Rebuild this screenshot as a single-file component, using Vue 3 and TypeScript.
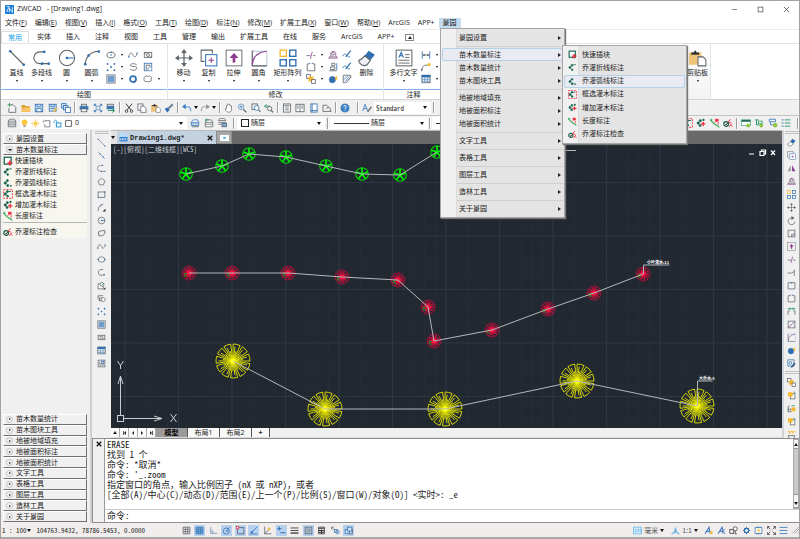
<script setup lang="ts">
import { ref } from 'vue'

const G = '#5d6267'
const B = '#2f6fb0'
const V = '#8d3b8f'
const Y = '#f6b92f'
const T = '#12604c'
const R = '#ee2b3a'

const p = (d: string, c = G, w = 1.3, f = 'none') =>
  `<path d="${d}" stroke="${c}" stroke-width="${w}" fill="${f}"/>`
const fl = (d: string, c = G) => `<path d="${d}" fill="${c}"/>`
const c = (x: number, y: number, r: number, s = G, w = 1.3, f = 'none') =>
  `<circle cx="${x}" cy="${y}" r="${r}" stroke="${s}" stroke-width="${w}" fill="${f}"/>`
const dot = (x: number, y: number, s = B, r = 1.2) => `<circle cx="${x}" cy="${y}" r="${r}" fill="${s}"/>`
const r = (x: number, y: number, w: number, h: number, s = G, f = 'none', sw = 1.3) =>
  `<rect x="${x}" y="${y}" width="${w}" height="${h}" stroke="${s}" stroke-width="${sw}" fill="${f}"/>`

const branch = c(3.6, 8, 1.9, T, 1, T) + c(7, 4.2, 1.7, T, 1, T)
const gear = c(8, 8, 3.8, B, 2) + p('M8 1.5v3M8 11.5v3M1.5 8h3M11.5 8h3M3.5 3.5l2 2M10.5 10.5l2 2M12.5 3.5l-2 2M5.5 10.5l-2 2', B, 1.6)
const scaleMark = p('M2 13.5L9 2l2 11.5M4.5 9.5h6', '#4b7fc0', 2)

const icons: Record<string, string> = {
  logo: '<rect width="16" height="16" rx="1" fill="#1b7fd8"/>' + p('M3 3h5L3 11h3M8 12V6l5 7V4', '#fff', 1.4),
  line: p('M2 2l12 12', G, 1) + dot(2, 2) + dot(14, 14),
  ray: p('M2 2l12 12', B, 1) + dot(5, 5, G) + dot(11, 11, B),
  pline: p('M10 2.5H6a5 5 0 0 0 0 10.500h8', G, 1) + dot(10, 2.5) + dot(8, 13) + dot(14, 13),
  circle: c(8, 8, 6.8, G, 0.9) + p('M8 8h6', B, 0.9) + dot(8, 8),
  arc: p('M2 14C2 7 7 2 14 2', G, 1) + dot(2, 13.5) + dot(5, 5.8) + dot(14, 2.3),
  ellipse: '<ellipse cx="8" cy="8" rx="6.5" ry="4.5" fill="none" stroke="#5d6267" stroke-width="1.3"/>' + dot(8, 8) + dot(8, 3.5),
  spline: p('M1 11C4 1 7 5 8 8s4 6 7-3', G, 1.2) + dot(1.5, 11) + dot(14.5, 5),
  region: r(2, 4, 12, 8) + c(8, 8, 2.4) + dot(4, 6, G, 0.8) + dot(12, 10, G, 0.8),
  points: dot(2.5, 3, B, 1.5) + dot(13.5, 3, B, 1.5) + dot(8, 8, B, 1.5) + dot(2.5, 13, B, 1.5) + dot(13.5, 13, B, 1.5),
  loop: p('M14 5C9 0 2 4 4 6s10 0 10 4-8 4-11 1', G, 1.3),
  block: r(2, 2, 12, 12, B) + r(5, 5, 6, 6, G) + c(11, 11, 3, '#7ea8d2', 1.2, '#fff'),
  hatch: r(1.5, 1.5, 13, 13) + '<rect x="3" y="3" width="10" height="10" fill="#6c9dcd"/>',
  donut: c(8, 8, 4.8, B, 2.8),
  cloud: p('M3 4q2-2 4 0q3-2 5 0q3 1 1 4q1 4-2 4q-2 1-4 0q-3 1-5-1q-1-2 0-4q-1-2 1-3z'),
  move: p('M8 2v12M2 8h12', G, 1.1) + fl('M8 0l2.500 3.500h-5zM8 16l2.500-3.500h-5zM0 8l3.500-2.500v5zM16 8l-3.500-2.500v5z'),
  copy: p('M4 11H1V1h10v3', G, 0.9) + r(5, 5, 10, 10, B, '#fff', 0.9) + p('M10 7.5v5M7.5 10h5', V, 0.9),
  stretch: r(1, 1, 14, 14, G, 'none', 0.8) + fl('M8 3.5L12 8H9.2v4H6.8V8H4z', V),
  fillet: p('M2 2h13v13H2z', '#9eb4d0', 0.7) + p('M2 1v14h13', G, 0.9) + p('M2 14Q3 3 15 2', V, 1),
  array: r(1, 1, 5.5, 5.5, Y, 'none', 1.2) + r(9.5, 1, 5.5, 5.5, B, 'none', 1.2) + r(1, 9.5, 5.5, 5.5, B, 'none', 1.2) + r(9.5, 9.5, 5.5, 5.5, B, 'none', 1.2),
  trim: p('M1 9h6M11 9h4', G) + p('M10 3L7 14', V),
  extend: p('M1 9h7M13 3v11', G) + p('M8 9l5-3', V),
  breakTwo: p('M5 3H2v11h12V3h-3') + dot(6, 2, B, 1) + dot(10, 2, B, 1),
  breakOne: p('M2 3h12v11H2z') + dot(8, 3, B, 1.4),
  join: p('M2 14V7h3M14 14V7h-3', G) + p('M1 3h14M5 1v4M11 1v4', '#31976d', 1.5),
  front: r(1, 1, 6, 6, G, '#fff') + '<rect x="4" y="4" width="8" height="8" fill="#f6b92f"/>' + r(9, 9, 6, 6, G, '#fff'),
  back: r(6, 5, 8, 9, G, '#fff') + '<rect x="2" y="2" width="8" height="8" fill="#f6b92f"/>' + p('M12 1l2 2-2 2', T, 1.2),
  above: p('M5 4H2v8', G) + r(2, 9, 5, 5) + '<rect x="8" y="6" width="7" height="7" fill="#f6b92f"/>' + p('M8 3h6', '#31976d', 1.5),
  offset: p('M1 13h14L12 8a4 4 0 1 0-7 0z', V, 1.2) + p('M3 11h10', G, 1.2) + c(8, 6, 2.2),
  align: p('M2 14h12M4 12V8h7v4zM6 6V2h5v4z') + p('M14 2v11', B),
  edit: p('M1 10q3-6 6-2t6 3', B) + p('M14 1L6 11', B, 2),
  editHatch: p('M2 2h12v4M2 2v12h4') + p('M5 12l7-8M3 9l6-6', B) + p('M14 5l-7 9', G, 1.5),
  explode: c(7, 9, 5, B, 1, B) + fl('M11 5l4-3-1 4 2 2-4 1z', Y),
  erase: fl('M9.5 1.5L15 5l-4 5-5-4z', B) + p('M6 6l5 4-3 4q-3 2-6-1T3 9z', G, 1, '#eef1f5'),
  mtext: r(1, 1, 14, 14, G, '#fff', 0.9) + p('M3.5 7.5L5.5 3l2 4.5M4 6h3', B, 1) + p('M9 5h4M9 7.5h4M3 10h10M3 12.5h10', G, 0.8),
  dim: p('M2 2v12M14 2v12', B) + p('M3 8h10', G) + fl('M2 8l4-2v4zM14 8l-4-2v4z'),
  leader: p('M1 14Q2 5 8 5h4', G) + dot(13, 4, Y, 2.6) + fl('M0 15l1-5 2 2z'),
  table: r(1.5, 2, 13, 12, G, '#fff') + '<rect x="1" y="1.5" width="14" height="4" fill="#2f6fb0"/>' + p('M1 8.5h14M1 11.5h14M6 5v9M10.5 5v9', B, 0.9),
  paste: '<rect x="0" y="3" width="11" height="11" fill="#eec47a"/>' + fl('M2 3h2l1.5-2 1.5 2h2v2H2z', '#333') + p('M8 7h4.500L15 9.500V15H8z', G, 0.9, '#fff'),
  new: p('M6 3h4l4 4v8H3V8') + p('M4 0v6M1 3h6', '#2f9a59', 1.5),
  open: fl('M1 3h5l1.5 2H14v9H1z', '#d99a2b') + fl('M2 7h13v7H1z', '#f7c765'),
  save: r(2, 2, 12, 12, B, '#d9e8f6') + r(4.5, 9, 7, 5, B, '#fff') + p('M5 2v4h6V2', B),
  saveAs: r(2, 2, 11, 11, B, '#d9e8f6') + p('M4 9h7M5 2v4h5V2', B) + p('M14 8l-5 6', Y, 2.5),
  saveAll: r(1, 1, 7, 7, B, '#d9e8f6') + r(4, 4, 7, 7, B, '#d9e8f6') + r(7, 7, 8, 8, B, '#fff'),
  print: r(4, 2, 8, 3, G, '#fff') + '<rect x="1" y="5" width="14" height="5.5" fill="#3a78b5"/>' + r(3.5, 9.5, 9, 4.5, G, '#fff'),
  preview: r(5, 5, 6, 6, '#5f94c7') + p('M2 2l3 3M14 2l-3 3M2 14l3-3M14 14l-3-3M2 5V2h3M11 2h3v3M2 11v3h3M11 14h3v-3', B, 1.3),
  publish: r(2, 2, 10, 3, G, '#fff') + '<rect x="1" y="5" width="12" height="5" fill="#3a78b5"/>' + p('M3 12h10M10 9l4 3-4 3', '#31976d', 1.6),
  cut: p('M3 1l8 10M13 1L5 11', '#333', 1.5) + c(4, 13, 2, '#333') + c(12, 13, 2, '#333'),
  copyClip: r(1.5, 1.5, 8, 10, G, '#fff') + p('M6 5h5l3.5 3v7H6z', G, 1.2, '#fff'),
  match: fl('M1 9l5-2 3 4-4 4z', B) + p('M7 9l7-7', '#6d7f95', 3.2),
  undo: p('M3 6h6q5 0 5 7', '#6fa4d8', 2) + fl('M6 1v9L0 6z', '#3f82c4'),
  redo: p('M13 6H7q-5 0-5 7', '#a4a9ae', 1.7) + fl('M10 2v8l6-4z', '#8c9297'),
  pan: p('M4 9V4q1-1 2 0V2q1-1 2 0v1q1-1 2 0v2q1-1 2 0v6q-1 4-4 4t-5-3L2 9q1-1 2 0z', G, 1.1, '#fff'),
  zoomRt: c(6.5, 6, 4.5, '#5f94c7') + p('M10 10l5 5', G, 2) + p('M4 6h5M6.5 3.5v5', B, 1),
  zoomWin: r(1.5, 1.5, 9, 9, G) + c(9, 8, 3.8, B, 1.2, '#fff') + p('M12 11l3 3', G, 1.8),
  zoomPrev: p('M1 5h8M4 2L1 5l3 3', '#31976d', 1.6) + c(9, 9, 3.5, G) + p('M11.5 12l3 3', G, 2),
  props: r(2.5, 1.5, 11, 13, G, '#fff') + '<rect x="4" y="3" width="8" height="2.5" fill="#8e9398"/>' + p('M5 8h6M5 11h6', G),
  design: r(1.5, 2, 13, 12, G, '#fff') + p('M8 2v12M3 5h3M3 8h3M10 5h3M10 8h3', G),
  tool: r(3, 1.5, 10, 13, B, '#fff') + p('M5 1v14M3 12h10', B),
  calc: p('M1.5 13.5v-10h6l3 3M1.5 13.5h13q0-6-5-7l-3 3', G),
  help: c(8, 8, 6.5, B, 1, '#3d83c9') + p('M6 6q0-2 2-2t2 2-2 2.5V10M8 11.5v1.3', '#fff', 1.3),
  style: p('M1 13L5 2l4 11M3 9h5', '#4b84bf', 1.5) + p('M15 6l-6 8', G, 2),
  layers: p('M4 2h8l2 3H2zM2 8h12M2 11h12M2 14h12M2 5v9M14 5v9', G, 1.2, '#fff'),
  layerSet: p('M5 3h7l2 4H2zM2 7v5h12V7M2 9.5h12', B, 1.2, '#fff') + p('M3 14h11', G),
  layerPrev: p('M4 3h8l2 4H2zM2 7v7h12V7M2 10h12', G, 1.2, '#fff') + p('M2 3h6M5 1L2 3l3 2', '#31976d'),
  layerState: p('M4 1h8l2 3H2zM2 7h12M2 10h5', G, 1.2, '#fff') + r(8, 8, 7, 6, G, '#79a9d9'),
  bulb: c(8, 6, 4.5, '#f6b21f', 1, '#ffcb3d') + '<rect x="6" y="11" width="4" height="3.5" fill="#999"/>',
  sun: c(8, 8, 3, '#f4b331', 1, '#ffd04f') + p('M8 0.5v3M8 12.5v3M0.5 8h3M12.5 8h3M3 3l2 2M11 11l2 2M13 3l-2 2M5 11l-2 2', '#f4b331', 1.3),
  freeze: p('M5 3h9v11H5V9', G) + p('M3 1v7M0 4h7', '#999', 1),
  lock: r(6, 7, 8, 7, '#2b97d3', '#fff', 1.8) + p('M7 7V4Q5 0 2 4v3', '#2b97d3', 1.6),
  box: r(3, 3, 10, 10, '#333', '#fff', 1.3),
  quick: r(2, 2, 11, 11, T, '#fff', 2) + p('M11 7v8M7 11h8', R, 2.4),
  fold: branch + p('M9 3h5', T, 1.3) + c(7.5, 12, 1.5, T, 1, T),
  arcMark: branch + c(7.5, 12, 1.8, T, 1, T) + c(12.5, 12.5, 1, T, 1, T),
  pick: '<rect x="1" y="1" width="14" height="14" fill="none" stroke="#ee2b3a" stroke-width="1.5" stroke-dasharray="3 2"/>' + branch + p('M8 4h5M4 8l4 4', T) + c(7.5, 11.5, 1.5, T, 1, T),
  add: branch + c(12, 3, 1.3, T, 1, T) + c(6.5, 12, 1.7, T, 1, T) + p('M11.5 6v7M8 9.5h7', R, 2),
  length: p('M1 3l5 6 5 3 4 3', '#2fa84f', 1.8) + c(2, 3, 1.2, '#2fa84f') + r(9, 2, 4, 3, R, R) + p('M7 8l3-3M13 6v5', R, 1.2),
  check: c(5, 9.5, 3.8, T, 1.8) + p('M4 12L12 2M10 14l4-5M12 11l3 3M8 7l5 1', R, 1.5) + p('M3 9l2 2 4-4', T, 1.5),
  polygon: p('M8 2l6 5-2.500 7h-7L2 7z'),
  rect: r(2, 3.5, 12, 9.5, G) + dot(2, 13, B) + dot(14, 3.5, B),
  arcTool: p('M2 14C2 7 5 3 11 2', G) + dot(7, 5) + fl('M15 10v5h-5z', '#222'),
  circleTool: c(8, 8, 6) + p('M8 8h6', B) + dot(8, 8),
  revcloud: p('M3 9q-2-5 2-5 5-2 9-1 1 4-2 7-2 3-6 2-4 1-3-3z', G, 1.5),
  ovalTool: '<ellipse cx="8" cy="8" rx="6" ry="4.8" fill="none" stroke="#5d6267" stroke-width="1.2"/>' + dot(2, 8) + dot(14, 8),
  earc: p('M11 3Q3 1 2.500 8T13 12', G) + dot(13, 12),
  insert: r(2, 5, 9, 9, G, '#fff') + c(9, 6, 3.5, G, 1.2, '#fff') + p('M8 8l4-4', '#31976d', 1.7) + fl('M15 11v4h-4z', '#222'),
  make: p('M2 3h9M2 3v5l4 4', G) + r(4, 7, 5, 5) + c(11, 10, 3.5, G, 1.2, '#fff'),
  note: r(2, 2, 12, 12) + p('M5 5v6h6V8', G) + r(8, 4, 4, 4, B),
  mirror: fl('M7 2v11H1z', '#9b9fa4') + fl('M9 2v11h6z', V),
  rotate: p('M12 5A6 6 0 1 0 14 10', G) + fl('M8 0l5 3.500L8 7z'),
  scale: r(2, 2, 12, 12) + p('M8 14V9h6', G, 1) + p('M9 13l4-4', V),
  chamfer: r(2, 2, 12, 12) + p('M3 13L13 3', V),
  clean: r(1.5, 1.5, 11, 11, B) + c(6, 7, 2.5, B) + p('M7 15l7-8', B, 2) + p('M14 8l-5 7', '#333', 1.5),
  abc: p('M1 3h4v4M6 3h4v3M11 3h4', Y, 1.8) + p('M3 9v6M13 9v6M3 10h10', G),
  gridA: '<rect x="1" y="3" width="14" height="9" fill="#fff" stroke="#31976d"/><rect x="1" y="3" width="14" height="3" fill="#1d6a51"/>' + c(11.5, 12, 2.5, '#78b52b', 1, '#8fcb34'),
  treeA: p('M2 3h5M4 3v8h4', '#31976d', 1.6) + r(7, 5, 6, 4, '#31976d', '#fff') + c(11.5, 12, 2.5, '#78b52b', 1, '#8fcb34'),
  treeB: p('M2 2h10v4H2zM4 6v5h4', '#4c86c5', 1.5) + c(11.5, 11.5, 3, '#78b52b', 1, '#8fcb34'),
  list: p('M6 3h9M6 8h9M6 13h9', '#31976d', 1.5) + p('M1 3h3M1 8h3M1 13h3', B, 1.5),
  doc: fl('M2 0h8l4 4v6H2z', '#b9dcf7') + '<rect x="1" y="7" width="14" height="8" fill="#2f80d0"/>' + p('M3 9v4M6 9v4M9 9v4M12 9v4', '#fff', 1.3),
  grid: p('M2 2h12v12H2zM6 2v12M10 2v12M2 6h12M2 10h12', '#4a5561', 1.2),
  gridB: '<rect x="1" y="2" width="14" height="12" fill="#7fb0e2"/>' + p('M2 2h12v12H2zM6 2v12M10 2v12M2 6h12M2 10h12', '#336fae', 1.2),
  ortho: p('M3 2v11h12M3 9h4v4', '#6a8eb5', 1.3),
  polar: c(7.5, 9, 5.5, B, 1.3) + p('M7 9l7-7M7 9h5', B, 1.3),
  osnap: r(3, 3, 11, 11, '#4a5561') + r(1, 1, 4, 4, R, '#fff', 1.2),
  otrack: p('M1 14h14M4 12L14 2', B, 1.4) + dot(5, 11, B, 2),
  ducs: p('M3 1v13h12M3 14l8-8', '#4a5561', 1.3) + dot(11, 5, Y, 2.5),
  dyn: p('M4 1v7M0 5h8M6 12h9', B, 1.8),
  lwt: p('M1 3.5h14M1 8h14', '#333', 1.5) + p('M1 12.5h14', '#333', 2.3),
  trans: r(2, 2, 12, 12, '#4a5561') + '<rect x="4" y="4" width="8" height="8" fill="#9aa5b2"/>',
  quickProp: r(3, 2, 10, 12, '#333') + p('M3 4h10M3 8h10M3 11h10M8 6v8', '#333', 1.8),
  cycle: p('M1 2l5 5M1 2h4M1 2v4', G) + r(6, 6, 5, 5, B) + c(11.5, 11, 3, B),
  cube: r(2, 6, 8, 7, B, '#cfe2f5') + r(6, 2, 8, 7, B, '#cfe2f5') + p('M8 14h7V5', G),
  ruler: r(1, 2, 14, 12, '#63b3e8', '#d6edfb') + p('M4 5v6M7 5v6M10 5v6M13 5v6', '#63b3e8', 1.2),
  annot: fl('M8 1l3.5 10 4 2-1 2-6.5-3-6.5 3-1-2 4-2z', '#74b8e6'),
  annotAdd: scaleMark + dot(13, 12, Y, 2.6),
  annotAll: scaleMark + p('M9 3l5 11M12 8l3-3', '#4b7fc0', 1.4),
  shapes: r(1.5, 6, 7, 7, '#333') + c(11, 5, 3.6, '#333', 1.3, '#fff') + p('M11 9v5h3', '#333'),
  gear,
  hw: r(2, 3, 12, 10, B, '#fff') + p('M9 4l-3 4h4l-3 4', Y, 1.6) + p('M5 1v2M8 1v2M11 1v2M5 13v2M8 13v2M11 13v2', B),
  full: p('M1 5V1h4M1 1l5 5M11 1h4v4M15 1l-5 5M1 11v4h4M1 15l5-5M15 11v4h-4M15 15l-5-5', '#444', 1.4),
  burger: p('M1 2.5h14M1 8h14M1 13.5h14', '#4a86c8', 1.7),
  winMin: p('M2 8h12', '#222', 1.2),
  winMax: r(2.5, 2.5, 11, 11, '#222'),
  winClose: p('M2 2l12 12M14 2L2 14', '#222', 1.5),
  boldClose: p('M2 2l12 12M14 2L2 14', '#111', 3.4),
}

const menus: [string, string][] = [
  ['文件', 'F'], ['编辑', 'E'], ['视图', 'V'], ['插入', 'I'], ['格式', 'O'], ['工具', 'T'], ['绘图', 'D'],
  ['标注', 'N'], ['修改', 'M'], ['扩展工具', 'X'], ['窗口', 'W'], ['帮助', 'H'], ['ArcGIS', ''], ['APP+', ''], ['景园', ''],
]
const tabs = ['常用', '实体', '插入', '注释', '视图', '工具', '管理', '输出', '扩展工具', '在线', '服务', 'ArcGIS', 'APP+']
const activeTab = ref('常用')

interface Big { icon: string; label: string; wide?: boolean }
interface Group { name: string; title: string; big: Big[]; small: string[]; tail: Big[] }
const groups: Group[] = [
  {
    name: 'draw', title: '绘图',
    big: [{ icon: 'line', label: '直线' }, { icon: 'pline', label: '多段线' }, { icon: 'circle', label: '圆' }, { icon: 'arc', label: '圆弧' }],
    small: ['ellipse', '▾', 'spline', 'region', '', 'points', '▾', 'loop', 'block', '', 'hatch', '▾', 'donut', 'cloud', '▾'],
    tail: [],
  },
  {
    name: 'modify', title: '修改',
    big: [{ icon: 'move', label: '移动' }, { icon: 'copy', label: '复制' }, { icon: 'stretch', label: '拉伸' }, { icon: 'fillet', label: '圆角' }, { icon: 'array', label: '矩形阵列', wide: true }],
    small: ['trim', '▾', 'offset', 'edit', '', 'breakTwo', '▾', 'align', 'edit', '', 'front', '▾', 'explode', 'editHatch', ''],
    tail: [{ icon: 'erase', label: '删除' }],
  },
  {
    name: 'note', title: '注释',
    big: [{ icon: 'mtext', label: '多行文字', wide: true }],
    small: ['dim', '▾', '', '', '', 'leader', '▾', '', '', '', 'table', '▾', '', '', ''],
    tail: [],
  },
  { name: 'clip', title: '', big: [{ icon: 'paste', label: '剪贴板' }], small: [], tail: [] },
]

const standardBar: { id: string; items: string[] }[] = [
  { id: 'five', items: ['new', 'open', 'save', 'saveAs', 'saveAll'] },
  { id: 'three', items: ['print', 'preview', 'publish'] },
  { id: 'four', items: ['cut', 'copyClip', 'paste', 'match'] },
  { id: 'undo', items: ['undo', '▾', 'redo', '▾'] },
  { id: 'four', items: ['pan', 'zoomRt', 'zoomWin', 'zoomPrev'] },
  { id: 'four', items: ['props', 'design', 'tool', 'calc'] },
  { id: 'one', items: ['help'] },
]

const plantTools = [
  { icon: 'quick', label: '快速插块' },
  { icon: 'fold', label: '乔灌折线标注' },
  { icon: 'arcMark', label: '乔灌弧线标注' },
  { icon: 'pick', label: '框选灌木标注' },
  { icon: 'add', label: '增加灌木标注' },
  { icon: 'length', label: '长度标注' },
  { icon: 'check', label: '乔灌标注检查' },
]
const menuGroups = [
  ['景园设置'],
  ['苗木数量标注', '苗木数量统计', '苗木图块工具'],
  ['地被地域填充', '地被面积标注', '地被面积统计'],
  ['文字工具'], ['表格工具'], ['图层工具'], ['造林工具'], ['关于景园'],
]
const lowerPanels = menuGroups.flat().slice(2)

const drawTools = ['line', 'ray', 'pline', 'polygon', 'rect', 'arcTool', 'circleTool', 'revcloud', 'spline', 'ovalTool', 'earc', 'insert', 'make', 'points', 'hatch', 'region', 'table', 'note']
const modifyTools = ['erase', 'copy', 'mirror', 'offset', 'array', 'move', 'rotate', 'scale', 'stretch', 'trim', 'extend', 'breakOne', 'breakTwo', 'join', 'chamfer', 'fillet', 'explode', 'clean']
const orderTools = ['front', 'back', 'above', 'back', 'abc']

const statusTools: [string, boolean][] = [
  ['grid', false], ['gridB', true], ['ortho', false], ['polar', true], ['osnap', true], ['otrack', true], ['ducs', false],
  ['dyn', true], ['lwt', false], ['trans', true], ['quickProp', false], ['cycle', false], ['cube', true],
]
const statusRight = ['annotAdd', 'annotAll', 'shapes', 'gear', 'hw', 'full', 'burger']

const log = [
  'ERASE', '找到 1 个', '命令: *取消*', "命令: '_.zoom",
  '指定窗口的角点，输入比例因子 (nX 或 nXP)，或者',
  '[全部(A)/中心(C)/动态(D)/范围(E)/上一个(P)/比例(S)/窗口(W)/对象(O)] <实时>: _e',
]
const command = ref('')

type Pt = [number, number]
const greens: Pt[] = [[186, 174], [222, 166], [249, 154], [286, 157], [326, 166], [362, 174], [400, 175], [437, 152]]
const reds: Pt[] = [[189, 273], [232, 273], [288, 273], [342, 277], [398, 280], [428, 307], [434, 341], [492, 330], [548, 309], [594, 293], [643, 274]]
const yellows: Pt[] = [[233, 361], [325, 409], [445, 409], [577, 381], [697, 406]]
const join = (pts: Pt[]) => pts.map((q) => q.join(',')).join(' ')

function crown(radius: number, petals: number, inner: number[]): string {
  const step = (Math.PI * 2) / petals
  const at = (a: number, k: number) => `${(Math.cos(a) * k).toFixed(2)} ${(Math.sin(a) * k).toFixed(2)}`
  let d = ''
  for (let i = 0; i < petals; i++) {
    const a = i * step + 0.15
    const b = a + step * 0.74
    d += `M0 0L${at(a, radius)}A${radius} ${radius} 0 0 1 ${at(b, radius)}L0 0`
    inner.forEach((k, j) => {
      d += `M0 0L${at(a + (step * 0.74 * (j + 1)) / (inner.length + 1), radius * k)}`
    })
  }
  return d
}
const yellowCrown = crown(17, 11, [0.85, 0.6])
const redCrown = crown(7, 10, [0.7])
const greenSpokes = Array.from({ length: 5 }, (_, i) => {
  const a = -Math.PI / 2 + (i * Math.PI * 2) / 5
  return `M0 0L${(Math.cos(a) * 6).toFixed(2)} ${(Math.sin(a) * 6).toFixed(2)}`
}).join('')
</script>

<template>
  <div class="window">
    <header class="title-bar">
      <svg class="ic s9" viewBox="0 0 16 16" v-html="icons.logo" />
      <h1>ZWCAD &nbsp; - [Drawing1.dwg]</h1>
      <div class="win-btns">
        <button v-for="w in ['winMin', 'winMax', 'winClose']" :key="w" :aria-label="w">
          <svg class="ic s7" viewBox="0 0 16 16" v-html="icons[w]" />
        </button>
      </div>
    </header>

    <nav class="menu-bar">
      <button v-for="[name, key] in menus" :key="name" :class="{ open: name === '景园' }">
        {{ name }}<template v-if="key">(<u>{{ key }}</u>)</template>
      </button>
    </nav>

    <nav class="ribbon-tabs">
      <button v-for="t in tabs" :key="t" :class="{ active: t === activeTab }" @click="activeTab = t">{{ t }}</button>
      <button class="collapse" aria-label="collapse"><i class="up" /></button>
    </nav>

    <section class="ribbon">
      <div v-for="g in groups" :key="g.name" class="group" :class="g.name">
        <div class="group-body">
          <button v-for="b in g.big" :key="b.label" class="big" :class="{ wide: b.wide }">
            <svg class="ic s18" viewBox="0 0 16 16" v-html="icons[b.icon]" />
            <span>{{ b.label }}</span>
            <i class="down small" />
          </button>
          <div v-if="g.small.length" class="small-grid">
            <template v-for="(s, i) in g.small" :key="i">
              <i v-if="s === '▾'" class="down small" />
              <svg v-else class="ic s10" viewBox="0 0 16 16" v-html="icons[s] ?? ''" />
            </template>
          </div>
          <button v-for="b in g.tail" :key="b.label" class="big">
            <svg class="ic s18" viewBox="0 0 16 16" v-html="icons[b.icon]" />
            <span>{{ b.label }}</span>
          </button>
        </div>
        <div v-if="g.title" class="group-title">{{ g.title }}</div>
      </div>
    </section>

    <div class="toolbar first">
      <template v-for="(g, i) in standardBar" :key="i">
        <div class="tools" :class="g.id">
          <template v-for="(t, k) in g.items" :key="k">
            <i v-if="t === '▾'" class="down" />
            <button v-else :aria-label="t"><svg class="ic s10" viewBox="0 0 16 16" v-html="icons[t]" /></button>
          </template>
        </div>
        <i class="sep" />
      </template>
      <svg class="ic s10" viewBox="0 0 16 16" v-html="icons.style" />
      <label class="field style-field">
        <select aria-label="文字样式"><option>Standard</option></select><i class="down" />
      </label>
      <i class="sep" />
    </div>

    <div class="toolbar second">
      <div class="tools one"><button aria-label="图层"><svg class="ic s10" viewBox="0 0 16 16" v-html="icons.layers" /></button></div>
      <label class="field layer-field">
        <svg v-for="s in ['bulb', 'sun', 'freeze', 'lock', 'box']" :key="s" class="ic s9" viewBox="0 0 16 16" v-html="icons[s]" />
        <select aria-label="图层"><option>0</option></select><i class="down" />
      </label>
      <div class="tools three">
        <button v-for="s in ['layerSet', 'layerPrev', 'layerState']" :key="s" :aria-label="s"><svg class="ic s10" viewBox="0 0 16 16" v-html="icons[s]" /></button>
      </div>
      <i class="sep" />
      <label class="field color-field">
        <i class="swatch" /><select aria-label="颜色"><option>随层</option></select><i class="down" />
      </label>
      <i class="sep" />
      <label class="field line-field">
        <i class="sample" /><select aria-label="线型"><option>随层</option></select><i class="down" />
      </label>
      <i class="sep" />
      <label class="field line-field"><i class="sample" /><select aria-label="线宽"><option>随层</option></select></label>
      <div class="tools plants">
        <button v-for="s in ['pick', 'add', 'length', 'check']" :key="s" :aria-label="s"><svg class="ic s10" viewBox="0 0 16 16" v-html="icons[s]" /></button>
      </div>
      <i class="sep" />
      <div class="tools four">
        <button v-for="s in ['gridA', 'treeA', 'treeB', 'list']" :key="s" :aria-label="s"><svg class="ic s10" viewBox="0 0 16 16" v-html="icons[s]" /></button>
      </div>
      <i class="sep" />
    </div>

    <main class="main">
      <aside class="side">
        <button class="fold-btn"><span class="knob"><i class="tri-r" /></span>景园设置</button>
        <button class="fold-btn"><span class="knob"><i class="down tiny" /></span>苗木数量标注</button>
        <ul>
          <li v-for="t in plantTools" :key="t.label" :class="{ split: t.icon === 'check' }">
            <button><svg class="ic s10" viewBox="0 0 16 16" v-html="icons[t.icon]" />{{ t.label }}</button>
          </li>
        </ul>
        <div class="lower">
          <button v-for="l in lowerPanels" :key="l" class="fold-btn"><span class="knob"><i class="tri-r" /></span>{{ l }}</button>
        </div>
      </aside>

      <div class="right-area">
        <div class="work">
          <div class="vbar draw-bar">
            <i class="grip" />
            <button v-for="t in drawTools" :key="t" :aria-label="t"><svg class="ic s9" viewBox="0 0 16 16" v-html="icons[t]" /></button>
          </div>

          <div class="document">
            <div class="doc-tabs">
              <span class="doc-list"><i class="down" /></span>
              <div class="doc-tab">
                <svg class="ic s9" viewBox="0 0 16 16" v-html="icons.doc" />
                <b>Drawing1.dwg*</b>
                <button aria-label="close"><svg class="ic s6" viewBox="0 0 16 16" v-html="icons.boldClose" /></button>
              </div>
              <button class="new-tab" aria-label="new"><i /></button>
            </div>

            <svg class="canvas" viewBox="111 144 671 284" preserveAspectRatio="xMinYMin slice">
              <defs>
                <pattern id="minor" x="124.5" y="128.5" width="10.7" height="10.7" patternUnits="userSpaceOnUse">
                  <path d="M0.5 0V10.7M0 0.5H10.7" stroke="#242b35" fill="none" />
                </pattern>
                <pattern id="major" x="124.5" y="128.5" width="53.5" height="53.5" patternUnits="userSpaceOnUse">
                  <path d="M0.5 0V53.5M0 0.5H53.5" stroke="#2e3644" fill="none" />
                </pattern>
                <g id="tree-g">
                  <circle r="6.3" fill="none" stroke="#07d507" stroke-width="1.1" />
                  <path :d="greenSpokes" stroke="#00f400" stroke-width="1.7" />
                </g>
                <g id="tree-r">
                  <path :d="redCrown" fill="none" stroke="#dc0a3e" stroke-width="0.7" />
                  <circle r="2.6" fill="#ff1744" opacity="0.8" />
                  <path d="M-2 0.5h-2.5v2.5h2.5" fill="none" stroke="#2c8a20" stroke-width="1" />
                </g>
                <g id="tree-y">
                  <path :d="yellowCrown" fill="none" stroke="#e6e600" stroke-width="0.9" />
                  <circle r="2.5" fill="#ffff20" />
                </g>
              </defs>
              <rect x="111" y="144" width="100%" height="100%" fill="#212830" />
              <rect x="111" y="144" width="100%" height="100%" fill="url(#minor)" />
              <rect x="111" y="144" width="100%" height="100%" fill="url(#major)" />

              <use v-for="(q, i) in greens" :key="'g' + i" href="#tree-g" :x="q[0]" :y="q[1]" />
              <use v-for="(q, i) in reds" :key="'r' + i" href="#tree-r" :x="q[0]" :y="q[1]" />
              <use v-for="(q, i) in yellows" :key="'y' + i" href="#tree-y" :x="q[0]" :y="q[1]" />
              <g fill="none" stroke="#b4b7bb">
                <polyline :points="join(greens)" />
                <polyline :points="join(reds)" />
                <polyline :points="join(yellows)" />
                <path d="M560 150.5h16M643.5 274v-9h26M697.5 406v-25h15" />
              </g>
              <text x="647" y="264" class="tag">小叶灌木:11</text>
              <text x="699" y="380" class="tag">大乔木:5</text>

              <g fill="none" stroke="#c9ccd0">
                <rect x="117.5" y="415.5" width="6" height="6" />
                <path d="M120.5 415V377M118 384l2.5-8 2.5 8M124 418.5h38M154 416l8 2.5-8 2.5" />
                <path d="M117.5 361l3 4.5 3-4.5M120.5 365v4M170.5 414l6 8M176.5 414l-6 8" />
              </g>
              <text x="113" y="152" class="view-label">[-][俯视][二维线框][WCS]</text>
              <g fill="none" stroke="#fff" stroke-width="1.2">
                <path d="M749 154h5M760 151.5h4v4h-4zM761.5 151.5v-1.5h4v4h-1.5M771 150.5l4 4.5M775 150.5l-4 4.5" />
              </g>
            </svg>

            <div class="layout-tabs">
              <button class="nav" aria-label="up"><i class="up" /></button>
              <button class="nav" aria-label="first"><i class="bar" /><i class="tri-l" /></button>
              <button class="nav" aria-label="previous"><i class="tri-l" /></button>
              <button class="nav" aria-label="next"><i class="tri-r" /></button>
              <button class="nav" aria-label="last"><i class="tri-r" /><i class="bar" /></button>
              <button class="lay on">模型</button>
              <button class="lay">布局1</button>
              <button class="lay">布局2</button>
              <button class="lay plus">+</button>
            </div>
          </div>

          <div class="vbar modify-bar">
            <i class="grip" />
            <button v-for="t in modifyTools" :key="t" :aria-label="t"><svg class="ic s9" viewBox="0 0 16 16" v-html="icons[t]" /></button>
            <i class="grip" />
            <button v-for="(t, i) in orderTools" :key="i" :aria-label="t"><svg class="ic s9" viewBox="0 0 16 16" v-html="icons[t]" /></button>
          </div>
        </div>

        <section class="console">
          <button class="console-close" aria-label="close"><svg class="ic s6" viewBox="0 0 16 16" v-html="icons.boldClose" /></button>
          <div class="console-main">
            <div class="log">
              <p v-for="l in log" :key="l">{{ l }}</p>
              <div class="scroll"><i class="cap"><i class="up" /></i><i class="thumb" /><i class="cap"><i class="down" /></i></div>
            </div>
            <label class="prompt">命令: <input v-model="command" type="text" /></label>
          </div>
        </section>
      </div>
    </main>

    <footer class="status">
      <span class="ratio">1 : 100</span><i class="down" />
      <span class="coords">104763.9432, 78786.5453, 0.0000</span>
      <div class="tools toggles">
        <button v-for="[s, on] in statusTools" :key="s" :class="{ on }" :aria-label="s"><svg class="ic s9" viewBox="0 0 16 16" v-html="icons[s]" /></button>
      </div>
      <div class="units">
        <svg class="ic s9" viewBox="0 0 16 16" v-html="icons.ruler" /><span>毫米</span><i class="down" />
        <svg class="ic s9 gap" viewBox="0 0 16 16" v-html="icons.annot" /><span>1:1</span><i class="down" />
      </div>
      <div class="tools extras">
        <button v-for="s in statusRight" :key="s" :aria-label="s"><svg class="ic s9" viewBox="0 0 16 16" v-html="icons[s]" /></button>
      </div>
      <i class="size-grip" />
    </footer>

    <div class="popup main-menu">
      <template v-for="(g, i) in menuGroups" :key="i">
        <hr v-if="i" />
        <button v-for="m in g" :key="m" :class="{ hot: m === '苗木数量标注' }">{{ m }}<i class="tri-r" /></button>
      </template>
    </div>
    <div class="popup sub-menu">
      <button v-for="t in plantTools" :key="t.label" :class="{ hot: t.icon === 'arcMark' }">
        <svg class="ic s9" viewBox="0 0 16 16" v-html="icons[t.icon]" />{{ t.label }}
      </button>
    </div>
  </div>
</template>

<style>
html,
body,
#app {
  height: 100%;
  margin: 0;
}
</style>

<style scoped>
* {
  box-sizing: border-box;
}
.window {
  position: relative;
  display: flex;
  flex-direction: column;
  height: 100%;
  overflow: hidden;
  border: 1px solid #a2a2a2;
  border-bottom: 0;
  background: #f0f0f0;
  color: #1b1b1b;
  font: 7px/10px 'Open Sans', 'Noto Sans CJK SC', sans-serif;
}
button {
  display: flex;
  align-items: center;
  justify-content: center;
  padding: 0;
  border: 0;
  background: none;
  color: inherit;
  font: inherit;
  white-space: nowrap;
}
select,
input {
  padding: 0;
  border: 0;
  outline: 0;
  background: none;
  color: inherit;
  font: inherit;
  appearance: none;
}
.ic { display: block; flex: none; }
.s6 { width: 6px; height: 6px; }
.s7 { width: 7px; height: 7px; }
.s9 { width: 9px; height: 9px; }
.s10 { width: 10px; height: 10px; }
.s18 { width: 18px; height: 18px; }
.down,
.up,
.tri-l,
.tri-r {
  flex: none;
  width: 0;
  height: 0;
  border: 2px solid transparent;
}
.down { border-width: 3px 2px 0; border-top-color: #111; }
.down.small { border-width: 2px 1px 0; }
.down.tiny { border-width: 2px 2px 0; }
.up { border-width: 0 2px 3px; border-bottom-color: #222; }
.tri-r { border-width: 2px 0 2px 3px; border-left-color: #222; }
.tri-l { border-width: 2px 3px 2px 0; border-right-color: #222; }

.title-bar {
  display: flex;
  align-items: center;
  gap: 3px;
  height: 16px;
  padding-left: 4px;
  background: #fff;
}
h1 { margin: 0; font-size: 7px; font-weight: 400; }
.win-btns { display: flex; margin-left: auto; }
.win-btns button { width: 26px; height: 16px; }

.menu-bar {
  display: flex;
  align-items: center;
  height: 12px;
  background: #fff;
}
.menu-bar button { height: 10px; padding: 0 4px; }
.menu-bar .open { background: #c5dcee; }

.ribbon-tabs {
  display: flex;
  gap: 1px;
  align-items: center;
  height: 14px;
  padding-top: 1px;
  border-top: 1px solid #ececec;
  background: #fff;
}
.ribbon-tabs button { height: 13px; padding: 0 7px; }
.ribbon-tabs .active {
  padding: 0 6px;
  border: 1px solid #dcdcdc;
  border-bottom: 0;
  color: #169fe6;
}
.ribbon-tabs .collapse { width: 9px; height: 7px; margin-left: 3px; padding: 0; border: 1px solid #888; }

.ribbon { display: flex; height: 56px; border-top: 1px solid #e4e4e4; background: #fff; }
.group { display: flex; flex-direction: column; border-right: 1px solid #e3e3e3; }
.draw { width: 167px; }
.modify { width: 216px; }
.note { width: 300px; }
.clip { width: 27px; background: linear-gradient(#fff, #f3f3f3); }
.clip .group-body { border: 0; padding-left: 1px; }
.group-body { display: flex; flex: 1; padding: 5px 0 0 3px; border-bottom: 1px solid #7fb0ea; }
.group-title { height: 9px; line-height: 9px; text-align: center; }
.note .group-title { padding-right: 240px; }
.big { flex-direction: column; justify-content: flex-start; width: 25px; }
.big.wide { width: 33px; }
.big span { line-height: 12px; }
.big .down { margin-top: 1px; }
.small-grid {
  display: grid;
  grid-template-columns: 14px 8px 14px 15px 8px;
  grid-auto-rows: 12px;
  place-items: center;
}
.modify .small-grid { grid-template-columns: 14px 8px 14px 14px; }
.modify .small-grid > :nth-child(5n) { display: none; }
.note .small-grid { margin-left: -1px; }

.toolbar { display: flex; flex: none; align-items: center; height: 16px; border-top: 1px solid #d5d5d5; }
.second { height: 15px; border-color: #c4c4c4; }
.tools { display: flex; flex: none; align-items: center; justify-content: space-between; margin: 0 3px; }
.tools:first-child { margin-left: 6px; }
.five { width: 64px; }
.four { width: 50px; }
.three { width: 37px; }
.one { width: 10px; }
.undo { width: 34px; }
.sep { flex: none; width: 2px; height: 11px; border-left: 1px solid #9c9c9c; border-right: 1px solid #fff; }
.toolbar > .ic { margin-left: 3px; }
.first .one { margin-right: 7px; }
.field { display: flex; align-items: center; height: 12px; background: #fff; }
.field .down { margin: 0 4px 0 auto; }
.style-field { width: 57px; margin: 0 2px; padding-left: 2px; font-family: 'Noto Sans Mono CJK SC', 'Liberation Mono', monospace; }
.layer-field { gap: 2px; width: 167px; }
.second .three { margin: 0 6px 0 3px; }
.color-field { width: 88px; margin: 0 2px; padding-left: 4px; gap: 2px; }
.swatch { width: 8px; height: 8px; border: 1px solid #222; }
.line-field { width: 98px; margin: 0 1px; padding-left: 4px; gap: 2px; }
.sample { width: 35px; height: 1px; background: #333; }
.second .plants { width: 50px; margin-left: auto; }
.second .four { margin-right: 6px; }

.main { display: flex; flex: 1; min-height: 0; }
.side {
  display: flex;
  flex-direction: column;
  width: 91px;
  padding: 3px 3px 1px 2px;
  border-right: 2px solid #cfcfcf;
  background: #f0f0f0;
}
.fold-btn {
  justify-content: flex-start;
  gap: 3px;
  height: 11px;
  padding-left: 2px;
  border: 1px solid #fff;
  border-right-color: #707070;
  border-bottom-color: #707070;
  background: #f0f0f0;
}
.knob { display: flex; align-items: center; justify-content: center; width: 7px; height: 7px; border: 1px solid #c3c3c3; border-radius: 50%; }
.knob .tri-r { border-width: 1px 0 1px 2px; }
ul { margin: 0; padding: 0; list-style: none; background: #f7f6ef; }
li { height: 11px; }
li.split { height: 16px; margin-top: 1px; padding-top: 3px; border-top: 1px solid #b9b9b9; }
li button { gap: 2px; height: 11px; }
.lower { display: flex; flex-direction: column; height: 108px; margin-top: auto; }
.lower .fold-btn { flex: 1; min-height: 0; }

.right-area { display: flex; flex: 1; flex-direction: column; min-width: 0; }
.work { display: flex; flex: 1; min-height: 0; }
.vbar { display: flex; flex: none; flex-direction: column; align-items: center; overflow: hidden; }
.draw-bar { width: 19px; }
.modify-bar { width: 17px; border-left: 2px solid #d0d4da; }
.vbar button { flex: none; height: 13px; }
.grip { flex: none; width: 14px; height: 3px; margin: 1px 0 2px; border: 1px solid #c0c0c0; border-width: 1px 0; }

.document { display: flex; flex: 1; flex-direction: column; min-width: 0; border-bottom: 1px solid #dcdcdc; }
.doc-tabs { display: flex; flex: none; height: 14px; border-top: 1px solid #bbb; background: #696969; }
.doc-list { display: flex; align-items: center; width: 6px; background: #e2e2e2; }
.doc-tab { display: flex; align-items: center; gap: 2px; width: 99px; padding: 0 3px 0 2px; background: #c3d1e0; }
.doc-tab b { font-family: 'Liberation Mono', monospace; }
.doc-tab button { margin-left: auto; }
.new-tab { width: 16px; border: 1px solid #8c8c8c; background: #a8a8a8; }
.new-tab i { width: 9px; height: 6px; background: radial-gradient(#55b4ee 1px, #fff 2px); }
.canvas { display: block; flex: 1; width: 100%; min-height: 0; background: #212830; }
.view-label { fill: #c8cbd0; font: 7px 'Noto Sans Mono CJK SC', 'Liberation Mono', monospace; }
.tag { fill: #fff; font: 700 4px 'Noto Sans CJK SC', sans-serif; }

.layout-tabs { display: flex; flex: none; height: 9px; background: #f0f0f0; }
.nav { width: 9px; border-right: 1px solid #aaa; background: #fafafa; }
.nav .bar { width: 1px; height: 4px; background: #555; }
.nav .tri-l { border-width: 2px 2px 2px 0; }
.nav .tri-r { border-width: 2px 0 2px 2px; }
.lay { width: 32px; border-right: 1px solid #555; background: #f8f8f8; line-height: 9px; }
.lay.on { background: #9b9b9b; color: #000; font-weight: 700; }
.lay.plus { width: 18px; font-weight: 700; }

.console {
  display: flex;
  flex: none;
  height: 85px;
  border: 1px solid #8e8e8e;
  border-width: 1px 0 1px 1px;
  background: #fff;
  font: 9px/10px 'Noto Sans Mono CJK SC', 'Liberation Mono', monospace;
}
.console-close { align-items: flex-start; width: 12px; padding-top: 2px; border-right: 1px solid #999; background: #f0f0f0; }
.console-main { display: flex; flex: 1; flex-direction: column; min-width: 0; }
.log { position: relative; flex: 1; padding: 1px 0 0 2px; border-bottom: 1px solid #ccc; white-space: pre; }
p { margin: 0; }
.scroll { position: absolute; top: 0; right: 0; bottom: 0; display: flex; flex-direction: column; width: 6px; background: #f4f4f4; border: 1px solid #aaa; }
.cap { display: flex; align-items: center; justify-content: center; height: 9px; border-bottom: 1px solid #999; }
.thumb { flex: 1; margin-bottom: 4px; background: #c9c9c9; border-bottom: 1px solid #999; }
.prompt { display: flex; align-items: center; height: 12px; padding-left: 2px; }
.prompt input { flex: 1; }

.status {
  display: flex;
  flex: none;
  align-items: center;
  height: 16px;
  padding-left: 1px;
  border-bottom: 2px solid #a8a8a8;
  background: #f0edec;
}
.ratio,
.coords { white-space: pre; font-family: 'Noto Sans Mono CJK SC', 'Liberation Mono', monospace; }
.coords { width: 144px; margin-left: 6px; }
.toggles { width: 174px; margin: 0; }
.toggles button { width: 11px; height: 11px; }
.toggles .on { background: #b7d0ee; }
.units { display: flex; align-items: center; gap: 2px; margin-left: auto; color: #555; font-family: 'Noto Sans CJK SC', sans-serif; }
.units .gap { margin-left: 5px; }
.extras { width: 84px; margin: 0 4px 0 6px; }
.size-grip { width: 7px; height: 7px; background: repeating-linear-gradient(135deg, #b0b0b0 0 1px, #f0edec 1px 2px); clip-path: polygon(100% 0, 100% 100%, 0 100%); }

.popup {
  position: absolute;
  display: flex;
  flex-direction: column;
  border: 1px solid #a6a6a6;
  background: linear-gradient(90deg, #f0f0f0 15px, #d2d2d2 15px, #e4e4e4 16px);
  box-shadow: 1px 1px 1px #777;
}
.popup button { justify-content: flex-start; border: 1px solid transparent; border-radius: 2px; }
.popup .hot { border-color: #b3d3ea; background: #eaeaf2; }
.main-menu { top: 27px; left: 439px; width: 125px; padding: 2px 1px; }
.main-menu button { height: 13px; padding: 0 1px 0 16px; }
.main-menu .tri-r { margin-left: auto; }
hr { width: 106px; height: 1px; margin: 2px 0 1px auto; border: 0; background: #cfcfcf; }
.sub-menu { top: 44px; left: 561px; width: 125px; height: 99px; padding: 2px 1px; }
.sub-menu button { flex: 1; min-height: 0; gap: 5px; padding-left: 3px; }
</style>
